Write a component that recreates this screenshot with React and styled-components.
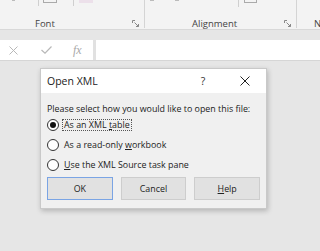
import React from "react";
import styled, { createGlobalStyle } from "styled-components";

const Global = createGlobalStyle`
  html, body { margin: 0; padding: 0; }
  body {
    background: #e6e6e6;
    font-family: "Open Sans", "Noto Sans", sans-serif;
    color: #222;
    overflow: hidden;
  }
`;

const Page = styled.div`
  width: 320px;
  height: 251px;
  display: flex;
  flex-direction: column;
`;

const Ribbon = styled.div`
  height: 29px;
  background: #f3f3f3;
  border-bottom: 1px solid #d8d8d8;
  display: flex;
  flex-shrink: 0;
`;

const Group = styled.div`
  width: ${(p) => p.$w}px;
  flex-shrink: 0;
  position: relative;
  border-right: ${(p) => (p.$last ? "none" : "1px solid #d4d4d4")};
  height: 28px;
`;

const GroupLabel = styled.div`
  position: absolute;
  bottom: -1px;
  left: 0;
  right: 0;
  text-align: left;
  padding-left: ${(p) => p.$pl || 0}px;
  font-size: 9.5px;
  color: #444;
  line-height: 11px;
`;

const Launcher = styled.svg`
  position: absolute;
  right: 5px;
  bottom: 1px;
  width: 7px;
  height: 7px;
`;

const Mark = styled.div`
  position: absolute;
  top: 0;
  left: ${(p) => p.$x}px;
  width: ${(p) => p.$w}px;
  height: ${(p) => p.$h}px;
  background: ${(p) => p.$bg || "transparent"};
  border: ${(p) => p.$border || "none"};
  border-top: none;
  box-sizing: border-box;
`;

const Band = styled.div`
  height: 10px;
  background: #e6e6e6;
  flex-shrink: 0;
`;

const FormulaBar = styled.div`
  height: 20px;
  display: flex;
  gap: 3px;
  background: #e1e1e1;
  border-bottom: 1px solid #d6d6d6;
  flex-shrink: 0;
`;

const FormulaTools = styled.div`
  width: 93px;
  background: #fff;
  display: flex;
  align-items: center;
  padding-left: 9px;
  box-sizing: border-box;
`;

const ToolIcon = styled.div`
  width: ${(p) => p.$w}px;
  display: flex;
  align-items: center;
  color: #b4b4b4;
`;

const Fx = styled.span`
  font-family: "Liberation Serif", serif;
  font-style: italic;
  font-size: 12px;
  color: #a8a8a8;
  line-height: 1;
`;

const FormulaInput = styled.div`
  flex: 1;
  background: #fff;
`;

const Sheet = styled.div`
  flex: 1;
  padding: 7px 0 0 40px;
`;

const Dialog = styled.div`
  width: 227px;
  height: 141px;
  background: #f0f0f0;
  border: 1px solid #c9c9c9;
  box-sizing: border-box;
  box-shadow: 1px 2px 5px rgba(0, 0, 0, 0.22);
  display: flex;
  flex-direction: column;
`;

const TitleBar = styled.div`
  height: 24px;
  background: #fff;
  display: flex;
  align-items: center;
  padding-left: 6px;
  flex-shrink: 0;
`;

const Title = styled.div`
  flex: 1;
  font-size: 10.5px;
  color: #222;
`;

const TitleButton = styled.div`
  width: 42px;
  height: 100%;
  display: flex;
  justify-content: center;
  align-items: center;
  font-size: 10.5px;
  color: #333;
`;

const Body = styled.div`
  padding: 10px 6px 0 6px;
  display: flex;
  flex-direction: column;
`;

const Prompt = styled.div`
  font-size: 8.9px;
  line-height: 12px;
  color: #222;
  white-space: nowrap;
`;

const Options = styled.div`
  display: flex;
  flex-direction: column;
  margin-top: 4px;
  gap: 8px;
`;

const Option = styled.div`
  display: flex;
  align-items: center;
  height: 12px;
`;

const Radio = styled.div`
  width: 12px;
  height: 12px;
  border-radius: 50%;
  border: 1px solid #333;
  background: #fff;
  box-sizing: border-box;
  display: flex;
  align-items: center;
  justify-content: center;
  flex-shrink: 0;
  &::after {
    content: "";
    width: 6px;
    height: 6px;
    border-radius: 50%;
    background: ${(p) => (p.$checked ? "#111" : "transparent")};
  }
`;

const OptionLabel = styled.span`
  margin-left: 4px;
  font-size: 8.9px;
  line-height: 10px;
  padding: 0 1px;
  color: #222;
  white-space: nowrap;
  outline: ${(p) => (p.$focus ? "1px dotted #555" : "none")};
`;

const U = styled.span`
  text-decoration: underline;
  text-underline-offset: 1px;
`;

const Buttons = styled.div`
  display: flex;
  gap: 8px;
  margin-top: 6px;
`;

const Button = styled.div`
  width: 66px;
  height: 23px;
  box-sizing: border-box;
  background: #e1e1e1;
  border: 1px solid ${(p) => (p.$primary ? "#7aa4e4" : "#cdcdcd")};
  display: flex;
  align-items: center;
  justify-content: center;
  font-size: 8.9px;
  color: #222;
`;

const LauncherIcon = () => (
  <Launcher viewBox="0 0 7 7">
    <path d="M0.5 3 V0.5 H3" stroke="#888" strokeWidth="1" fill="none" />
    <path d="M6.5 4 V6.5 H4 M6.5 6.5 L2.5 2.5" stroke="#888" strokeWidth="1" fill="none" />
  </Launcher>
);

export default function App() {
  return (
    <Page>
      <Global />
      <Ribbon>
        <Group $w={144}>
          <Mark $x={12} $w={3} $h={1} $bg="#bbb" />
          <Mark $x={38} $w={1} $h={6} $bg="#cfcfcf" />
          <Mark $x={43} $w={14} $h={3} $border="1px solid #aaa" />
          <Mark $x={73} $w={1} $h={6} $bg="#cfcfcf" />
          <Mark $x={79} $w={14} $h={3} $bg="#ece0ea" />
          <GroupLabel $pl={35}>Font</GroupLabel>
          <LauncherIcon />
        </Group>
        <Group $w={151}>
          <Mark $x={5} $w={4} $h={1} $bg="#bbb" />
          <Mark $x={30} $w={4} $h={1} $bg="#bbb" />
          <Mark $x={93} $w={1} $h={7} $bg="#cfcfcf" />
          <Mark $x={99} $w={13} $h={3} $border="1px solid #aaa" />
          <GroupLabel $pl={47}>Alignment</GroupLabel>
          <LauncherIcon />
        </Group>
        <Group $w={25} $last>
          <GroupLabel $pl={17}>N</GroupLabel>
        </Group>
      </Ribbon>
      <Band />
      <FormulaBar>
        <FormulaTools>
          <ToolIcon $w={32}>
            <svg width="9" height="9" viewBox="0 0 9 9">
              <path d="M0.5 0.5 L8.5 8.5 M8.5 0.5 L0.5 8.5" stroke="#b8b8b8" strokeWidth="1" />
            </svg>
          </ToolIcon>
          <ToolIcon $w={32}>
            <svg width="11" height="8" viewBox="0 0 11 8">
              <path d="M0.5 4 L4 7.2 L10.5 0.5" stroke="#b8b8b8" strokeWidth="1.2" fill="none" />
            </svg>
          </ToolIcon>
          <ToolIcon $w={14}>
            <Fx>fx</Fx>
          </ToolIcon>
        </FormulaTools>
        <FormulaInput />
      </FormulaBar>
      <Sheet>
        <Dialog>
          <TitleBar>
            <Title>Open XML</Title>
            <TitleButton>?</TitleButton>
            <TitleButton>
              <svg width="10" height="10" viewBox="0 0 10 10">
                <path d="M0.5 0.5 L9.5 9.5 M9.5 0.5 L0.5 9.5" stroke="#222" strokeWidth="1" />
              </svg>
            </TitleButton>
          </TitleBar>
          <Body>
            <Prompt>Please select how you would like to open this file:</Prompt>
            <Options>
              <Option>
                <Radio $checked />
                <OptionLabel $focus>
                  As an XML <U>t</U>able
                </OptionLabel>
              </Option>
              <Option>
                <Radio />
                <OptionLabel>
                  As a read-only <U>w</U>orkbook
                </OptionLabel>
              </Option>
              <Option>
                <Radio />
                <OptionLabel>
                  <U>U</U>se the XML Source task pane
                </OptionLabel>
              </Option>
            </Options>
            <Buttons>
              <Button $primary>OK</Button>
              <Button>Cancel</Button>
              <Button>
                <span>
                  <U>H</U>elp
                </span>
              </Button>
            </Buttons>
          </Body>
        </Dialog>
      </Sheet>
    </Page>
  );
}
